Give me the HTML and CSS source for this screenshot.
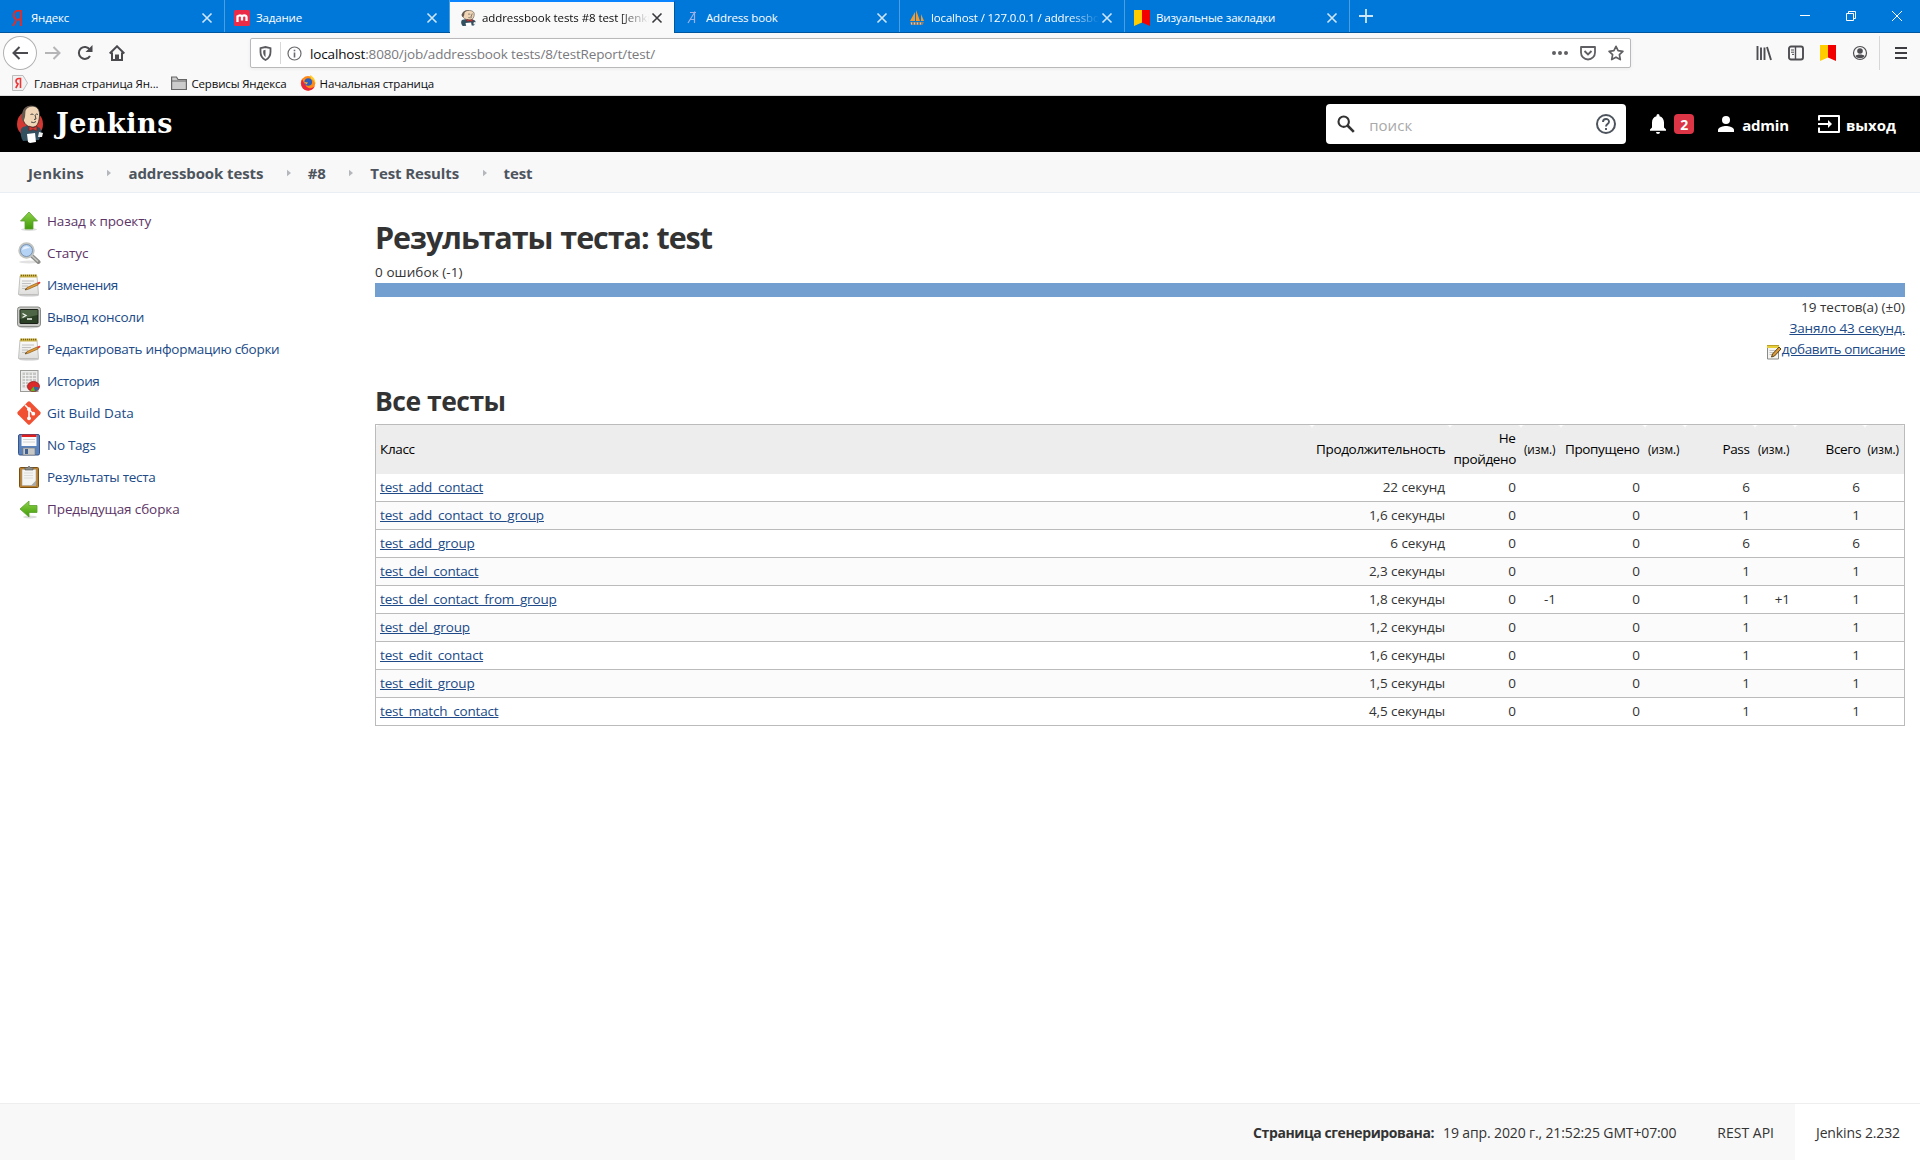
FILE: index.html
```html
<!DOCTYPE html>
<html lang="ru">
<head>
<meta charset="utf-8">
<title>addressbook tests #8 test [Jenkins]</title>
<link rel="stylesheet" href="styles.css">
</head>
<body>
<svg class="defs" width="0" height="0">
  <defs>
    <linearGradient id="green" x1="0" y1="0" x2="0" y2="1"><stop offset="0" stop-color="#8ed34a"/><stop offset="1" stop-color="#3f9a06"/></linearGradient>
    <linearGradient id="paper" x1="0" y1="0" x2="0" y2="1"><stop offset="0" stop-color="#fdfdfd"/><stop offset="1" stop-color="#dededc"/></linearGradient>
  </defs>
  <symbol id="x" viewBox="0 0 12 12"><path d="M1.500 1.500l9 9M10.500 1.500l-9 9" fill="none" stroke="currentColor" stroke-width="1.600"/></symbol>
  <symbol id="flag" viewBox="0 0 16 16"><path d="M0 0h8v12.500l-8 3.500z" fill="#fc0"/><path d="M8 0h8v16l-8-3.500z" fill="#f20000"/></symbol>
  <symbol id="butler" viewBox="0 0 28 38">
    <path d="M5 24c2-3 5-3 8-3l9 1c3 1 4 4 3 8l-2 5-16 1C5 33 4 28 5 24z" fill="#335061"/>
    <path d="M7 7c1-5 6-6.500 10-6 5 .6 7 5 6.500 10-.4 5-1.500 10-5.500 11-4 .6-8-1-10-5C6.500 14 6 10 7 7z" fill="#f0d6b7" stroke="#2b2b2b" stroke-width=".8"/>
    <path d="M6.500 8C5 9 4.500 14 7.500 16.500L9 12 9.500 6C11 2.500 14 1.500 17 1.200 12-.5 7 3 6.500 8z" fill="#66584f"/>
    <path d="M14.500 9.500q1.500-1 3 0M19.500 9.500q1.200-1 2.500 0M15 17q3 1.500 5-.5M19 10l1 4-2 .5" fill="none" stroke="#333" stroke-width=".9"/>
    <path d="M13 21l4 2 4-2v5l-4-1.500-4 1.500z" fill="#d33833" stroke="#701c1a" stroke-width=".6"/>
    <path d="M11 29l8-1 1 9-6 1-2-1z" fill="#fff"/><path d="M23 27l4 1-1 4h-4z" fill="#eee"/>
  </symbol>
  <symbol id="notepad" viewBox="0 0 24 24">
    <ellipse cx="12" cy="22.500" rx="10" ry="1" fill="#ccc"/>
    <path d="M3 3h17l1.500 18.500h-20z" fill="url(#paper)" stroke="#b4b4b0" stroke-width=".8"/>
    <path d="M3 1.500h17v3H3z" fill="#c9b04a"/><path d="M4 2.500h15" stroke="#796410" stroke-width="1.400" stroke-dasharray="1 1"/>
    <path d="M5 8h12M5 10.500h9M5 13h6M5 15.500h4" stroke="#bbb" stroke-width=".9"/>
    <path d="M8 17l2-2.500 10-4.500 1.200 1.900-10 4.400z" fill="#e29a35" stroke="#79500f" stroke-width=".6"/><path d="M20 9.700l2.300-1c1.200-.2 1.400 1.200.6 1.800l-1.700 1.100z" fill="#e23c2c"/><path d="M8 17l1.200-1.700.6.800z" fill="#222"/>
  </symbol>
  <symbol id="note" viewBox="0 0 16 16">
    <path d="M1.500 2.500h11v12.500h-11z" fill="#f4f4f2" stroke="#8a8a86"/>
    <path d="M1 1h12v3H1z" fill="#e8cf3a"/><path d="M1.500 1.500h11" stroke="#8c7418" stroke-dasharray="1 1"/>
    <path d="M3.500 6.500h7M3.500 8.500h5M3.500 10.500h3" stroke="#bbb" stroke-width=".9"/>
    <path d="M5.500 13l1-3 6.500-7 2 2-6.500 7z" fill="#d9993a" stroke="#4d3408" stroke-width=".9"/>
  </symbol>
  <symbol id="tri" viewBox="0 0 5 8"><path d="M0 0l5 4-5 4z" fill="#b4b8bc"/></symbol>
</svg>

<div class="tabs">
  <div class="tab"><svg class="fav" viewBox="0 0 16 16"><path d="M11.800 16V.5H10C6.500.5 4.800 2.500 4.800 5.200c0 2.200 1 3.500 2.800 4.600L4 16M11.800 9.500H9" fill="none" stroke="#f0281e" stroke-width="1.800"/></svg><span class="tt">Яндекс</span><svg class="close"><use href="#x"/></svg></div>
  <div class="tab"><svg class="fav" viewBox="0 0 16 16"><rect width="16" height="16" rx="1.500" fill="#ea2c48"/><path d="M3.500 12V5.500M3.500 7C4 4.800 7.800 4.800 8 7v3.500M8 7c.2-2.200 4.300-2.200 4.500 0v4" fill="none" stroke="#fff" stroke-width="2.300"/></svg><span class="tt">Задание</span><svg class="close"><use href="#x"/></svg></div>
  <div class="tab active"><svg class="fav" viewBox="3 0 23 36" preserveAspectRatio="none"><use href="#butler" width="28" height="38"/></svg><span class="tt fade">addressbook tests #8 test [Jenkins]</span><svg class="close"><use href="#x"/></svg></div>
  <div class="tab"><svg class="fav" viewBox="0 0 16 16"><path d="M4 13L10.500 2.500V13M6 9.500h4M6 2.500h6" fill="none" stroke="#9db0e8" stroke-width="1.200"/></svg><span class="tt">Address book</span><svg class="close"><use href="#x"/></svg></div>
  <div class="tab"><svg class="fav" viewBox="0 0 16 16"><path d="M1 11L6 2v9zM7 11V0l4 11zM12 11V4l3 7z" fill="#f29a2e"/><path d="M1 12h14l-1.500 3H2z" fill="#8a8175"/><path d="M2.500 14.500v-2M5.500 14.500v-2M8.500 14.500v-2M11.500 14.500v-2" stroke="#ddd" stroke-width=".8"/></svg><span class="tt fade">localhost / 127.0.0.1 / addressbook</span><svg class="close"><use href="#x"/></svg></div>
  <div class="tab"><svg class="fav"><use href="#flag"/></svg><span class="tt">Визуальные закладки</span><svg class="close"><use href="#x"/></svg></div>
  <svg class="plus" viewBox="0 0 14 14"><path d="M7 0v14M0 7h14" stroke="#cfe6f9" stroke-width="1.800"/></svg>
  <div class="win">
    <svg viewBox="0 0 10 10"><path d="M0 4.500h10" stroke="#fff"/></svg>
    <svg viewBox="0 0 10 10"><path d="M.5 2.500h7v7h-7zM2.500 2.500v-2h7v7h-2" fill="none" stroke="#fff"/></svg>
    <svg viewBox="0 0 10 10"><path d="M0 0l10 10M10 0L0 10" stroke="#fff"/></svg>
  </div>
</div>

<div class="nav">
  <div class="back"><svg width="16" height="14" viewBox="0 0 16 14"><path d="M7.500 1L1.500 7l6 6M1.500 7H16" fill="none" stroke="#4a4a4f" stroke-width="2"/></svg></div>
  <svg class="fwd" width="16" height="14" viewBox="0 0 16 14"><path d="M8.500 1l6 6-6 6M14.500 7H0" fill="none" stroke="#b5b5b7" stroke-width="2"/></svg>
  <svg class="reload" width="16" height="16" viewBox="0 0 16 16"><path d="M12.800 4.500A6 6 0 1 0 13 11" fill="none" stroke="#4a4a4f" stroke-width="2"/><path d="M15.500 0v7h-7z" fill="#4a4a4f"/></svg>
  <svg class="home" width="16" height="16" viewBox="0 0 16 16"><path d="M.7 8.500L8 1.300l7.300 7.200M3 7.500V15h10V7.500" fill="none" stroke="#4a4a4f" stroke-width="2"/><path d="M6 15V9.500h4V15z" fill="#4a4a4f"/></svg>
  <div class="url">
    <svg width="13" height="15" viewBox="0 0 13 15"><path d="M1.500 2.200L6.500 1l5 1.200V6c0 4-2 6.500-5 8-3-1.500-5-4-5-8z" fill="none" stroke="#5a5a5e" stroke-width="1.800"/><path d="M6.500 3.800v7.500C4.800 9.800 4.200 8 4.200 6V4.400z" fill="#5a5a5e"/></svg>
    <i class="sep"></i>
    <svg width="15" height="15" viewBox="0 0 15 15"><circle cx="7.500" cy="7.500" r="6.500" fill="none" stroke="#6a6a6e" stroke-width="1.200"/><path d="M7.500 6.500V11.500M7.500 3.700v1.600" stroke="#6a6a6e" stroke-width="1.600"/></svg>
    <span class="addr"><b>localhost</b>:8080/job/addressbook tests/8/testReport/test/</span>
    <svg width="16" height="4" viewBox="0 0 16 4"><path d="M2 2h.01M8 2h.01M14 2h.01" stroke="#606064" stroke-width="4" stroke-linecap="round"/></svg>
    <svg class="pocket" width="16" height="15" viewBox="0 0 16 15"><path d="M1 1h14v5.500a7 7 0 0 1-14 0z" fill="none" stroke="#606064" stroke-width="1.800" stroke-linejoin="round"/><path d="M4.500 5L8 8.500 11.500 5" fill="none" stroke="#606064" stroke-width="1.900"/></svg>
    <svg width="16" height="16" viewBox="0 0 16 16"><path d="M8 1.300l2.100 4.400 4.800.6-3.500 3.400.9 4.900L8 12.200l-4.300 2.400.9-4.900L1.100 6.300l4.800-.6z" fill="none" stroke="#606064" stroke-width="1.700" stroke-linejoin="round"/></svg>
  </div>
  <div class="tools">
    <svg viewBox="0 0 16 16"><path d="M1.500 1v14M5 2.500V15M8.500 2.500V15M11 2l4 13" stroke="#4e4e52" stroke-width="1.900"/></svg>
    <svg viewBox="0 0 16 16"><rect x="1" y="1.500" width="14" height="13" rx="2" fill="none" stroke="#4e4e52" stroke-width="1.900"/><path d="M7.500 2v12" stroke="#4e4e52" stroke-width="1.400"/><path d="M3 5h3M3 7.200h3M4 9.400h2" stroke="#4e4e52"/></svg>
    <svg viewBox="0 0 16 16"><use href="#flag"/></svg>
    <svg viewBox="0 0 16 16"><circle cx="8" cy="8" r="6.500" fill="none" stroke="#4e4e52" stroke-width="1.200"/><circle cx="8" cy="6" r="2.800" fill="#4e4e52"/><path d="M3.500 11c1-2 8-2 9 0-1.500 3-7.500 3-9 0z" fill="#4e4e52"/></svg>
  </div>
  <div class="menu"><svg width="12" height="12" viewBox="0 0 12 12"><path d="M0 1h12M0 6h12M0 11h12" stroke="#3e3e42" stroke-width="1.900"/></svg></div>
</div>

<div class="marks">
  <svg viewBox="0 0 16 16"><path d="M.5.5h10.500l4.500 7.500-4.500 7.500H.5z" fill="#f1f1f1" stroke="#bcbcbc"/><path d="M8.500 13V3.500H7C4.500 3.500 4 5 4 6.200c0 1.600 1 2.200 2 2.800L3.800 13" fill="none" stroke="#e33" stroke-width="1.600"/></svg><span>Главная страница Ян...</span>
  <svg viewBox="0 0 16 16"><path d="M.6 14.500V2h4.900l1.500 2.500h8.400v10zM.6 6h14.800" fill="#ccc" stroke="#666" stroke-width="1.200"/></svg><span>Сервисы Яндекса</span>
  <svg viewBox="0 0 16 16"><circle cx="8" cy="8.300" r="7.200" fill="#ff8a16"/><path d="M2 4C.3 8 .8 13 5 15c4 1.500 8 .5 10-4-3 3-8 3-9.500-1C4 8 3 6 2 4z" fill="#e8263c"/><circle cx="8.300" cy="7" r="3.800" fill="#2a5fc0"/><path d="M10 0c4 2 5.500 5 5.300 9-.8-3-2.300-4.500-4.300-5z" fill="#ffd02c"/><path d="M4 7l4 .5-1.500 2z" fill="#ffb02c"/></svg><span>Начальная страница</span>
</div>

<header class="head">
  <svg class="logo" viewBox="0 0 28 38"><ellipse cx="14" cy="19" rx="13" ry="13.500" fill="#d33833"/><use href="#butler"/></svg><span class="brand">Jenkins</span>
  <div class="search">
    <svg width="18" height="18" viewBox="0 0 18 18"><circle cx="6.700" cy="6.700" r="5.200" fill="none" stroke="#333" stroke-width="2.100"/><path d="M10.500 10.500l6.300 6.300" stroke="#333" stroke-width="2.600"/></svg>
    <span class="ph">поиск</span>
    <svg width="20" height="20" viewBox="0 0 20 20"><circle cx="10" cy="10" r="9" fill="none" stroke="#4d545d" stroke-width="2"/><path d="M7 8c0-4 6-4 6-.3C13 10 10 10 10 12.500M10 14v2" fill="none" stroke="#4d545d" stroke-width="1.900"/></svg>
  </div>
  <svg class="bell" width="16" height="20" viewBox="0 0 16 20"><path d="M8 20a2 2 0 0 0 2-2H6a2 2 0 0 0 2 2zM14 13.500V8.500c0-3-1.600-5.600-4.500-6.300V1.500a1.500 1.500 0 0 0-3 0v.7C3.600 2.900 2 5.400 2 8.500v5l-2 2v1.200h16v-1.200z" fill="#fff"/></svg>
  <span class="badge">2</span>
  <svg class="person" width="16" height="16" viewBox="0 0 16 16"><circle cx="8" cy="4" r="4" fill="#fff"/><path d="M0 16v-2c0-2.700 5.300-4 8-4s8 1.300 8 4v2z" fill="#fff"/></svg>
  <span class="user">admin</span>
  <svg class="exit" width="22" height="18" viewBox="0 0 22 18"><path d="M1 5.500V1h20v16H1v-4.500M0 9h12" fill="none" stroke="#fff" stroke-width="2" stroke-linejoin="round"/><path d="M10 5l4 4-4 4z" fill="#fff"/></svg>
  <span class="out">выход</span>
</header>

<nav class="crumbs">
  <span>Jenkins</span><svg><use href="#tri"/></svg>
  <span>addressbook tests</span><svg><use href="#tri"/></svg>
  <span>#8</span><svg><use href="#tri"/></svg>
  <span>Test Results</span><svg><use href="#tri"/></svg>
  <span>test</span>
</nav>

<div class="body">
  <aside class="side">
    <a class="visited"><svg viewBox="0 0 24 24"><ellipse cx="12" cy="20.500" rx="8" ry="1.500" fill="#ddd"/><path d="M12 3l8.500 9H16v8H8v-8H3.500z" fill="url(#green)" stroke="#5aa02c" stroke-width=".8"/></svg><span class="k1">Назад к проекту</span></a>
    <a class="visited"><svg viewBox="0 0 24 24"><ellipse cx="12" cy="21" rx="10" ry="1.500" fill="#e2e2e2"/><path d="M15 15l6.500 6" stroke="#8b8d88" stroke-width="4" stroke-linecap="round"/><path d="M15 15l6 5.500" stroke="#c9cac7" stroke-width="1.500"/><circle cx="9.500" cy="9.500" r="7" fill="#b5d4f5" stroke="#c2c4c0" stroke-width="2.400"/><circle cx="9.500" cy="9.500" r="6" fill="none" stroke="#6789b5" stroke-width=".8"/><path d="M5 9c1-4 5-5 8-2-3 0-5 1-8 2z" fill="#e6f1fd"/></svg><span class="k1">Статус</span></a>
    <a><svg><use href="#notepad"/></svg><span class="k3">Изменения</span></a>
    <a><svg viewBox="0 0 24 24"><ellipse cx="12" cy="22" rx="10" ry="1.500" fill="#ccc"/><rect x=".5" y="2" width="23" height="19.500" rx="2.500" fill="#c9cac6" stroke="#888a85"/><rect x="3" y="4.500" width="18" height="14" rx=".5" fill="#2c4025" stroke="#1a1f18"/><path d="M3.500 5h17v5l-17 4z" fill="#4e6645"/><path d="M5.500 8.500l3.500 2-3.500 2M10 14h5" fill="none" stroke="#f2f6ee" stroke-width="1.300"/></svg><span class="k2">Вывод консоли</span></a>
    <a><svg><use href="#notepad"/></svg><span class="k2">Редактировать информацию сборки</span></a>
    <a><svg viewBox="0 0 24 24"><rect x="3.500" y="1.500" width="17.500" height="21" fill="#eee" stroke="#9b9b98"/><rect x="5.500" y="3.500" width="13.500" height="15" fill="#c6c6c4"/><path d="M5.500 6.500H19M5.500 9.500H19M5.500 12.500H19M5.500 15.500H19M8.500 3.500v15M12 3.500v15M15.500 3.500v15" stroke="#f6f6f6" stroke-width=".8"/><ellipse cx="16.500" cy="17.500" rx="6" ry="5" fill="#dc2a2a" stroke="#8e1616" stroke-width=".8"/><path d="M16.500 17.500l5.500 1c-.5 2-2 3.300-4 3.700z" fill="#3465a4"/><path d="M16.500 17.500l1.500 4.800c-1.800.2-3.200 0-4.500-.8z" fill="#62b51b"/></svg><span class="k3">История</span></a>
    <a><svg viewBox="0 0 24 24"><path d="M10.800.8q1.200-1 2.400 0l10 10q1 1.200 0 2.400l-10 10q-1.200 1-2.400 0l-10-10q-1-1.200 0-2.400z" fill="#f05133"/><path d="M8 4l4 4v9M12 8.500l4.500 4.500" fill="none" stroke="#fff" stroke-width="1.600"/><circle cx="12" cy="8.200" r="1.900" fill="#fff"/><circle cx="12" cy="17.300" r="1.900" fill="#fff"/><circle cx="16.300" cy="12.700" r="1.900" fill="#fff"/></svg><span>Git Build Data</span></a>
    <a><svg viewBox="0 0 24 24"><rect x="1.500" y="1.500" width="21" height="20.500" rx="1.500" fill="#5a83bd" stroke="#36558a"/><rect x="4.500" y="2" width="15" height="11" fill="#fafafa"/><path d="M4.500 1.500h15v2.500h-15z" fill="#de1f1f"/><path d="M6 6.500h12M6 9h12" stroke="#ccc" stroke-width=".8"/><rect x="6" y="15" width="12" height="7" fill="#c8c9c6" stroke="#777" stroke-width=".6"/><rect x="8" y="16" width="3" height="5" fill="#3f5f91"/></svg><span class="k2">No Tags</span></a>
    <a><svg viewBox="0 0 24 24"><rect x="2.500" y="2.500" width="19" height="20" rx="1" fill="#b9812f" stroke="#7a4f12"/><path d="M5 4.500h14V20.500H5z" fill="#f4f4f2" stroke="#aaa" stroke-width=".6"/><path d="M7 8h9M7 10.500h9M7 13h9" stroke="#dcdcdc"/><path d="M19 15.500l-5 5h5z" fill="#a8a8a4"/><path d="M8 5V2.500h2.500q1.500-2.500 3 0H16V5z" fill="#8a8c87" stroke="#555" stroke-width=".6"/></svg><span class="k2">Результаты теста</span></a>
    <a class="visited"><svg viewBox="0 0 24 24"><ellipse cx="13" cy="20" rx="7" ry="1.500" fill="#ddd"/><path d="M3 12l9-8v4.500h8v7h-8V20z" fill="url(#green)" stroke="#5aa02c" stroke-width=".8"/></svg><span class="k1">Предыдущая сборка</span></a>
  </aside>

  <main class="main">
    <h1>Результаты теста: test</h1>
    <div class="fails">0 ошибок (-1)</div>
    <div class="bar"></div>
    <div class="sum">
      <div>19 тестов(а) (±0)</div>
      <div><a class="k1">Заняло 43 секунд.</a></div>
      <div class="desc"><svg><use href="#note"/></svg><a class="k2">добавить описание</a></div>
    </div>
    <h2>Все тесты</h2>
    <table class="res">
      <colgroup><col><col class="w138"><col class="w71"><col class="w40"><col class="w84"><col class="w40"><col class="w70"><col class="w40"><col class="w70"><col class="w40"></colgroup>
      <thead><tr><th>Класс</th><th>Продолжительность</th><th>Не пройдено</th><th class="d">(изм.)</th><th>Пропущено</th><th class="d">(изм.)</th><th>Pass</th><th class="d">(изм.)</th><th>Всего</th><th class="d">(изм.)</th></tr></thead>
      <tbody>
        <tr><td><a>test_add_contact</a></td><td>22 секунд</td><td>0</td><td></td><td>0</td><td></td><td>6</td><td></td><td>6</td><td></td></tr>
        <tr><td><a>test_add_contact_to_group</a></td><td>1,6 секунды</td><td>0</td><td></td><td>0</td><td></td><td>1</td><td></td><td>1</td><td></td></tr>
        <tr><td><a>test_add_group</a></td><td>6 секунд</td><td>0</td><td></td><td>0</td><td></td><td>6</td><td></td><td>6</td><td></td></tr>
        <tr><td><a>test_del_contact</a></td><td>2,3 секунды</td><td>0</td><td></td><td>0</td><td></td><td>1</td><td></td><td>1</td><td></td></tr>
        <tr><td><a>test_del_contact_from_group</a></td><td>1,8 секунды</td><td>0</td><td>-1</td><td>0</td><td></td><td>1</td><td>+1</td><td>1</td><td></td></tr>
        <tr><td><a>test_del_group</a></td><td>1,2 секунды</td><td>0</td><td></td><td>0</td><td></td><td>1</td><td></td><td>1</td><td></td></tr>
        <tr><td><a>test_edit_contact</a></td><td>1,6 секунды</td><td>0</td><td></td><td>0</td><td></td><td>1</td><td></td><td>1</td><td></td></tr>
        <tr><td><a>test_edit_group</a></td><td>1,5 секунды</td><td>0</td><td></td><td>0</td><td></td><td>1</td><td></td><td>1</td><td></td></tr>
        <tr><td><a>test_match_contact</a></td><td>4,5 секунды</td><td>0</td><td></td><td>0</td><td></td><td>1</td><td></td><td>1</td><td></td></tr>
      </tbody>
    </table>
  </main>
</div>

<footer class="foot">
  <b class="gen">Страница сгенерирована:</b><span class="date">19 апр. 2020 г., 21:52:25 GMT+07:00</span>
  <span class="api">REST API</span>
  <span class="ver">Jenkins 2.232</span>
</footer>
</body>
</html>
```
FILE: styles.css
```css
* { box-sizing: border-box; }
body { margin: 0; width: 1920px; height: 1160px; display: flex; flex-direction: column; overflow: hidden; background: #fff; color: #333; font: 13.5px/21px "Open Sans", "Noto Sans", sans-serif; }
svg { display: block; flex: none; }
.defs { position: absolute; }

/* browser tabs */
.tabs { height: 33px; display: flex; align-items: stretch; background: #0078d9; border-bottom: 1px solid #0057a0; color: #fff; font-size: 11.5px; letter-spacing: -.15px; }
.tab { width: 225px; padding: 3px 11px 0 9px; display: flex; align-items: center; border-right: 1px solid #4a9fe3; }
.tab.active { height: 33px; background: #f9f9fa; color: #0c0c0d; border-top: 2px solid #0a84ff; border-right-color: #0057a0; padding: 1px 11px 0 10px; }
.fav { width: 16px; height: 16px; margin-right: 6px; }
.tt { flex: 1; min-width: 0; overflow: hidden; white-space: nowrap; line-height: 20px; }
.fade { mask-image: linear-gradient(to right, #000 82%, transparent); margin-right: 2px; }
.active .fade { letter-spacing: -.08px; }
.close { width: 12px; height: 12px; color: #cfe6f9; }
.active .close { color: #3a3a3e; }
.plus { width: 14px; height: 14px; margin: 9px 0 0 9px; }
.win { margin: 11px 18px 0 auto; display: flex; gap: 36px; }
.win svg { width: 10px; height: 10px; }

/* address row */
.nav { height: 38px; display: flex; align-items: center; background: #f9f9fa; padding: 2px 13px 0 3px; }
.back { width: 34px; height: 34px; border: 1px solid #b1b1b3; border-radius: 50%; background: #fff; display: flex; align-items: center; justify-content: center; }
.fwd { margin-left: 8px; }
.reload, .home { margin-left: 16px; }
.url { width: 1382px; height: 30px; margin-left: 125px; padding: 0 6px 0 8px; background: #fff; border: 1px solid #b9b9bb; border-radius: 2px; box-shadow: 0 1px 4px rgba(0,0,0,.06); display: flex; align-items: center; }
.sep { width: 1px; height: 22px; margin: 0 6px 0 8px; background: #d7d7db; }
.addr { margin: 2px auto 0 8px; color: #7a7a7e; letter-spacing: -.15px; white-space: nowrap; }
.addr b { font-weight: 400; color: #0c0c0d; }
.pocket { margin: 0 12px; }
.tools { margin-left: 125px; display: flex; gap: 16px; }
.tools svg { width: 16px; height: 16px; }
.menu { margin-left: 11px; height: 34px; padding-left: 15px; border-left: 1px solid #d7d7db; display: flex; align-items: center; }

/* bookmarks */
.marks { height: 25px; display: flex; align-items: center; background: #f9f9fa; border-bottom: 1px solid #ddd; padding: 0 0 1px 12px; color: #0c0c0d; font-size: 11.5px; letter-spacing: -.15px; }
.marks svg { width: 16px; height: 16px; }
.marks span { margin: 1px 13px 0 6px; white-space: nowrap; }
.marks span:nth-of-type(n+2) { margin-left: 4px; }

/* Jenkins header */
.head { height: 56px; background: #000; color: #fff; display: flex; align-items: center; padding: 0 24px 0 16px; font-size: 15px; font-weight: 700; }
.logo { width: 28px; height: 38px; }
.brand { margin: -1px auto 0 12px; font: 700 27px/40px "DejaVu Serif", serif; letter-spacing: .5px; }
.search { width: 300px; height: 40px; background: #fff; border-radius: 4px; display: flex; align-items: center; padding: 0 10px 0 11px; }
.ph { margin: 3px auto 0 14px; color: #a9a9a9; font-weight: 400; letter-spacing: .05px; }
.bell { margin-left: 24px; }
.badge { width: 20px; height: 20px; margin-left: 8px; border-radius: 4px; background: #dc3545; text-align: center; font-size: 14px; line-height: 22px; }
.person { margin-left: 24px; }
.user { margin: 3px 0 0 8px; letter-spacing: -.2px; }
.exit { margin-left: 29px; }
.out { margin: 3px 0 0 6px; }

.crumbs { height: 41px; display: flex; align-items: center; background: #f8f8f8; border-bottom: 1px solid #e8eef3; padding: 2px 0 0 28px; color: #4d545d; font-weight: 700; font-size: 15px; letter-spacing: -.11px; white-space: nowrap; }
.crumbs span:first-child { letter-spacing: .15px; }
.crumbs svg { width: 4px; height: 8px; margin: -1px 17px 0 23.5px; }

.body { flex: 1; display: flex; padding-right: 15px; }
.side { flex: none; width: 375px; padding: 12px 0 0 17px; }
.side a { height: 32px; display: flex; align-items: center; gap: 6px; color: #204a87; white-space: nowrap; }
.side .visited { color: #5c3566; }
.side svg { width: 24px; height: 24px; }
.k1 { letter-spacing: -.1px; }
.k2 { letter-spacing: -.28px; }
.k3 { letter-spacing: -.46px; }
.main { flex: 1; padding-top: 24px; }
h1, h2 { margin: 0; color: #333; font-weight: 700; }
h1 { font-size: 30.5px; line-height: 40px; height: 45px; letter-spacing: -1.05px; word-spacing: 1px; }
h2 { font-size: 26.5px; line-height: 36px; margin-top: 23px; height: 41px; letter-spacing: -.5px; }
.fails { height: 21px; letter-spacing: .08px; }
.bar { height: 14px; background: #729fcf; }
.sum { text-align: right; }
a { color: #204a87; }
.sum a, .res a { text-decoration: underline; }
.desc { display: flex; justify-content: flex-end; align-items: center; }
.desc .k2 { letter-spacing: -.36px; }
.desc svg { width: 16px; height: 16px; margin-top: 4px; }

/* results table */
.res { width: 1530px; table-layout: fixed; border-collapse: collapse; border: 1px solid #bbb; }
.w138 { width: 138px; } .w71 { width: 71px; } .w40 { width: 40px; } .w84 { width: 84px; } .w70 { width: 70px; }
.res th { height: 49px; padding: 3px 5px 3px 4px; background: #ededed; color: #000; font-weight: 400; text-align: right; border-radius: 4px 4px 0 0; letter-spacing: -.35px; }
.res th:nth-child(2), .res th:nth-child(9) { padding-right: 4px; }
.res th:first-child, .res td:first-child { text-align: left; padding-left: 4px; }
.res th.d { font-size: 11.8px; letter-spacing: -.05px; padding-left: 0; }
.res td { height: 28px; padding: 2px 4.5px 2px 4px; text-align: right; border-bottom: 1px solid #bbb; letter-spacing: -.08px; }
.res td a { letter-spacing: -.17px; }
.res tr:nth-child(even) td { background: #fbfbfb; }

.foot { height: 57px; flex: none; display: flex; align-items: center; justify-content: flex-end; background: #f8f8f8; border-top: 1px solid #eee; white-space: nowrap; font-size: 14px; letter-spacing: -.13px; }
.gen { letter-spacing: -.4px; }
.date { margin-left: 9px; }
.api { margin: 0 21px 0 41px; letter-spacing: 0; }
.ver { width: 125px; height: 56px; background: #fff; padding-left: 21px; display: flex; align-items: center; }
```
